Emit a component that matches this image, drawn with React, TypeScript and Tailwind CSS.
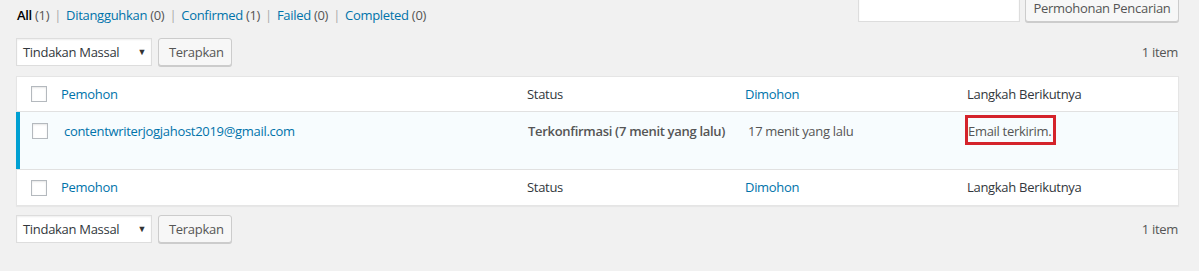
import React from "react";

const font = "font-['Open_Sans','Noto_Sans',sans-serif] tracking-[-0.3px]";

const Checkbox = () => (
  <span className="block w-4 h-4 bg-white border border-[#b4b9be] shadow-[inset_0_1px_2px_rgba(0,0,0,0.1)]" />
);

const BulkActions = () => (
  <div className="flex items-center gap-[6px]">
    <div className="flex items-center justify-between w-[136px] h-[28px] bg-white border border-[#ddd] shadow-[inset_0_1px_2px_rgba(0,0,0,0.07)] pl-[6px] pr-[5px] text-[#32373c]">
      <span>Tindakan Massal</span>
      <span className="text-[9px] text-[#333]">▼</span>
    </div>
    <button className="h-[28px] px-[10px] w-[74px] bg-[#f7f7f7] border border-[#ccc] rounded-[3px] shadow-[0_1px_0_#ccc] text-[#555]">
      Terapkan
    </button>
  </div>
);

const Tablenav = () => (
  <div className="flex items-center justify-between h-[28px]">
    <BulkActions />
    <span className="text-[#555] pr-[1px]">1 item</span>
  </div>
);

const cols = "grid grid-cols-[34px_466px_218px_222px_1fr]";

const HeadRow = ({ bottom }: { bottom?: boolean }) => (
  <div
    className={`${cols} items-center ${bottom ? "h-[36px] border-t border-[#e1e1e1]" : "h-[35px] border-b border-[#e1e1e1]"}`}
  >
    <div className="pl-[14px]">
      <Checkbox />
    </div>
    <div className="pl-[10px] text-[#0073aa]">Pemohon</div>
    <div className="pl-[10px] text-[#32373c]">Status</div>
    <div className="pl-[10px] text-[#0073aa]">Dimohon</div>
    <div className="pl-[10px] text-[#32373c]">Langkah Berikutnya</div>
  </div>
);

export default function App() {
  return (
    <div className={`${font} text-[13px] leading-[1.4] bg-[#f1f1f1] w-[1199px] h-[271px] overflow-hidden pl-[16px] pr-[20px]`}>
      <div className="flex justify-between items-start h-[38px]">
        <div className="pt-[6px] pl-[1px] text-[#666]">
          <span className="text-black font-semibold">All</span> <span className="text-[#555]">(1)</span>
          <span className="mx-[5px] text-[#aaa]">|</span>
          <span className="text-[#0073aa]">Ditangguhkan</span> <span className="text-[#555]">(0)</span>
          <span className="mx-[5px] text-[#aaa]">|</span>
          <span className="text-[#0073aa]">Confirmed</span> <span className="text-[#555]">(1)</span>
          <span className="mx-[5px] text-[#aaa]">|</span>
          <span className="text-[#0073aa]">Failed</span> <span className="text-[#555]">(0)</span>
          <span className="mx-[5px] text-[#aaa]">|</span>
          <span className="text-[#0073aa]">Completed</span> <span className="text-[#555]">(0)</span>
        </div>
        <div className="flex items-center gap-[5px] -mt-[6px]">
          <div className="w-[162px] h-[28px] bg-white border border-[#ddd] shadow-[inset_0_1px_2px_rgba(0,0,0,0.07)]" />
          <button className="h-[28px] w-[154px] bg-[#f7f7f7] border border-[#ccc] rounded-[3px] shadow-[0_1px_0_#ccc] text-[#555]">
            Permohonan Pencarian
          </button>
        </div>
      </div>

      <Tablenav />

      <div className="mt-[10px] bg-white border border-[#e5e5e5] shadow-[0_1px_1px_rgba(0,0,0,0.04)]">
        <HeadRow />
        <div className={`${cols} h-[57px] bg-[#f7fcfe] border-l-4 border-[#00a0d2] -ml-[1px] items-start`}>
          <div className="pl-[12px] pt-[11px]">
            <Checkbox />
          </div>
          <div className="pl-[10px] pt-[10px] text-[#0073aa]">contentwriterjogjahost2019@gmail.com</div>
          <div className="pl-[8px] pt-[10px] font-semibold text-[#555]">Terkonfirmasi (7 menit yang lalu)</div>
          <div className="pl-[10px] pt-[10px] text-[#555]">17 menit yang lalu</div>
          <div className="pl-[8px] pt-[10px] text-[#555]">
            <span className="relative">
              Email terkirim.
              <span className="absolute -left-[3px] -top-[7px] w-[91px] h-[30px] border-[3px] border-[#d4232b]" />
            </span>
          </div>
        </div>
        <HeadRow bottom />
      </div>

      <div className="mt-[9px]">
        <Tablenav />
      </div>
    </div>
  );
}
